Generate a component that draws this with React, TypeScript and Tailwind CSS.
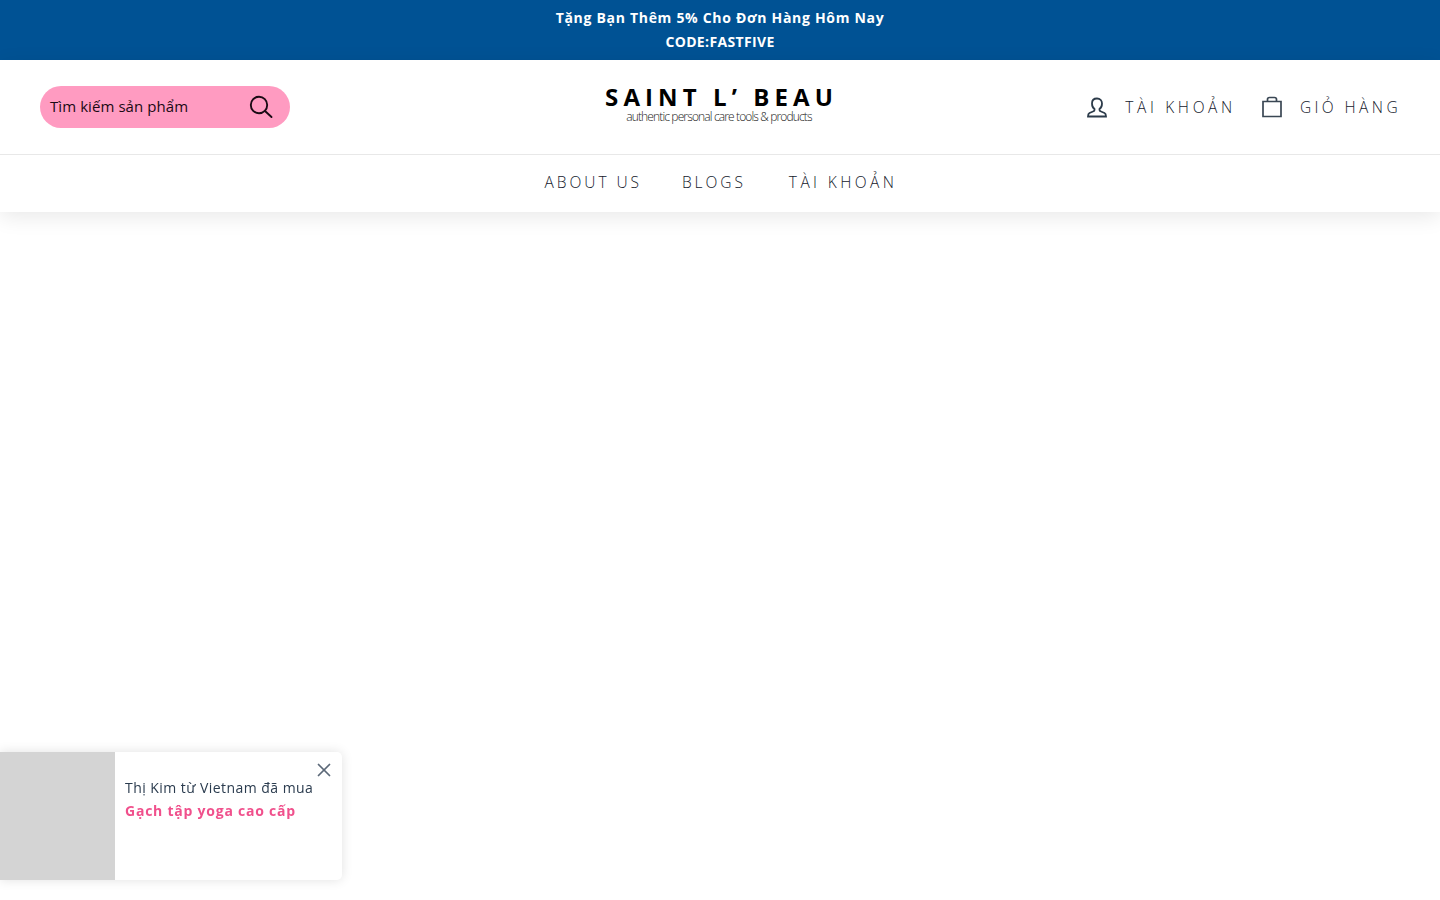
import { X } from 'lucide-react'

const SearchIcon = () => (
    <svg viewBox="0 0 24 24" className="w-[24px] h-[24px]" fill="none" stroke="#1a0a14" strokeWidth="1.9">
        <circle cx="10" cy="10" r="8.2" />
        <path d="M16 16l6.500 6" strokeLinecap="round" />
    </svg>
)

const UserIcon = () => (
    <svg viewBox="0 0 22 22" className="w-[22px] h-[22px]" fill="none" stroke="#2c3b4a" strokeWidth="1.8">
        <path d="M11 2.500c-3 0-5 2-5 5 0 2.500 1 4.500 2.500 5.500v1c0 .8-.5 1.200-1.500 1.500l-3.500 1.500c-1 .5-1.500 1.500-1.500 3.500h18c0-2-.5-3-1.500-3.500l-3.500-1.500c-1-.3-1.500-.7-1.500-1.500v-1c1.500-1 2.500-3 2.500-5.500 0-3-2-5-5-5z" />
    </svg>
)

const BagIcon = () => (
    <svg viewBox="0 0 22 22" className="w-[22px] h-[22px]" fill="none" stroke="#3a4754" strokeWidth="1.7">
        <path d="M2 5.500h18v15H2z" />
        <path d="M6.500 5.500V3.500c0-1.200.8-2 2-2h5c1.200 0 2 .8 2 2v2" />
    </svg>
)

export default function App() {
    return (
        <div className="min-h-[900px] bg-white font-['Open_Sans',sans-serif]">
            <div className="h-[60px] bg-[#005294] pt-[6px] text-center text-white text-[14px] leading-[24px] font-bold tracking-[0.05em]">
                <p>Tặng Bạn Thêm 5% Cho Đơn Hàng Hôm Nay</p>
                <p className="tracking-[0.025em]">CODE:FASTFIVE</p>
            </div>

            <header className="shadow-[0_5px_20px_rgba(0,0,0,0.09)]">
                <div className="h-[95px] px-10 grid grid-cols-3 items-center border-b border-[#e8e8e8]">
                    <div className="w-[250px] h-[42px] rounded-full bg-[#ff9bc1] pl-[10px] pr-[17px] flex items-center justify-between">
                        <span className="text-[15px] leading-[20px] mt-[-2px] tracking-[0.005em] text-[#1a0a14]">Tìm kiếm sản phẩm</span>
                        <SearchIcon />
                    </div>

                    <div className="flex flex-col items-center pb-[5px]">
                        <span className="text-[24px] leading-[24px] font-bold tracking-[0.212em] mr-[-3px] text-black whitespace-pre">SAINT L’ BEAU</span>
                        <span className="text-[12px] leading-[14px] mt-[1px] mr-[2px] font-light tracking-[-0.072em] text-[#222]">authentic personal care tools &amp; products</span>
                    </div>

                    <div className="flex justify-end items-center gap-[25px] mr-[-1px]">
                        <a href="#" className="flex items-center gap-[17px]">
                            <UserIcon />
                            <span className="text-[15.5px] leading-[20px] mt-[-1px] tracking-[0.235em] font-light text-[#14202c]">TÀI KHOẢN</span>
                        </a>
                        <a href="#" className="flex items-center gap-[17px]">
                            <BagIcon />
                            <span className="text-[15.5px] leading-[20px] mt-[-1px] tracking-[0.22em] font-light text-[#14202c]">GIỎ HÀNG</span>
                        </a>
                    </div>
                </div>

                <nav className="h-[57px] pb-[3px] pl-[2px] flex items-center justify-center gap-[40px] text-[15.5px] leading-[22px] font-light text-[#14202c]">
                    <a href="#" className="tracking-[0.19em]">ABOUT US</a>
                    <a href="#" className="tracking-[0.19em]">BLOGS</a>
                    <a href="#" className="ml-[3px] tracking-[0.22em]">TÀI KHOẢN</a>
                </nav>
            </header>

            <div className="fixed left-0 bottom-[20px] w-[342px] h-[128px] flex bg-white rounded-r-[5px] shadow-[0_0_12px_rgba(0,0,0,0.12)]">
                <div className="w-[115px] bg-[#d4d4d4]" />
                <div className="flex-1 pl-[10px] pt-[24px]">
                    <p className="text-[14px] leading-[23px] tracking-[0.032em] text-[#2a3b4e]">Thị Kim từ Vietnam đã mua</p>
                    <p className="text-[14px] leading-[23px] font-bold tracking-[0.055em] text-[#f0508c]">Gạch tập yoga cao cấp</p>
                </div>
                <button className="absolute top-[7px] right-[7px] text-[#5b6878]">
                    <X size={22} strokeWidth={1.9} />
                </button>
            </div>
        </div>
    )
}
